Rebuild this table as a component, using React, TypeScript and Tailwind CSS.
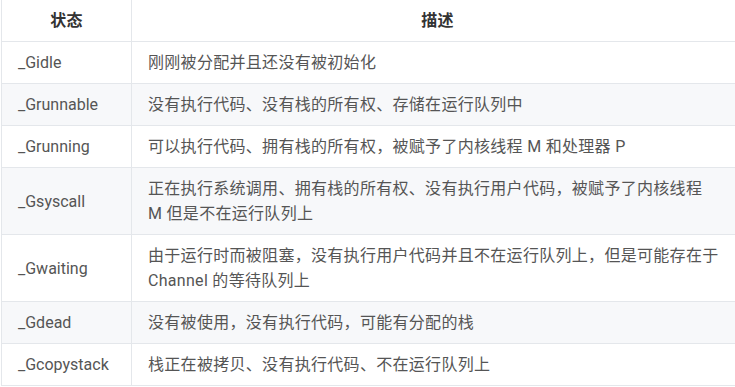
const rows: [string, string][] = [
  ['_Gidle', '刚刚被分配并且还没有被初始化'],
  ['_Grunnable', '没有执行代码、没有栈的所有权、存储在运行队列中'],
  ['_Grunning', '可以执行代码、拥有栈的所有权，被赋予了内核线程 M 和处理器 P'],
  ['_Gsyscall', '正在执行系统调用、拥有栈的所有权、没有执行用户代码，被赋予了内核线程 M 但是不在运行队列上'],
  ['_Gwaiting', '由于运行时而被阻塞，没有执行用户代码并且不在运行队列上，但是可能存在于 Channel 的等待队列上'],
  ['_Gdead', '没有被使用，没有执行代码，可能有分配的栈'],
  ['_Gcopystack', '栈正在被拷贝、没有执行代码、不在运行队列上'],
]

export default function App() {
  return (
    <div className="bg-white w-[735px] h-[387px] overflow-hidden pl-px">
      <table
        className="w-[740px] border-collapse text-[16px] leading-[25px] text-[#555] tracking-[0.3px]"
        style={{ fontFamily: 'Roboto, "Noto Sans CJK SC", sans-serif' }}
      >
        <colgroup>
          <col className="w-[130px]" />
          <col />
        </colgroup>
        <thead>
          <tr>
            <th className="border-b border-l border-[#e4e7eb] px-4 py-2 font-bold text-[#333] text-center">状态</th>
            <th className="border-b border-l border-[#e4e7eb] px-4 py-2 font-bold text-[#333] text-center pr-[14px]">描述</th>
          </tr>
        </thead>
        <tbody>
          {rows.map(([name, desc], i) => (
            <tr key={name} className={i % 2 === 1 ? 'bg-[#f7f8fa]' : 'bg-white'}>
              <td className="border border-r-0 border-[#e4e7eb] px-4 py-2 align-middle tracking-normal">{name}</td>
              <td className="border border-r-0 border-[#e4e7eb] pl-4 py-2 pr-[22px]">{desc}</td>
            </tr>
          ))}
        </tbody>
      </table>
    </div>
  )
}
